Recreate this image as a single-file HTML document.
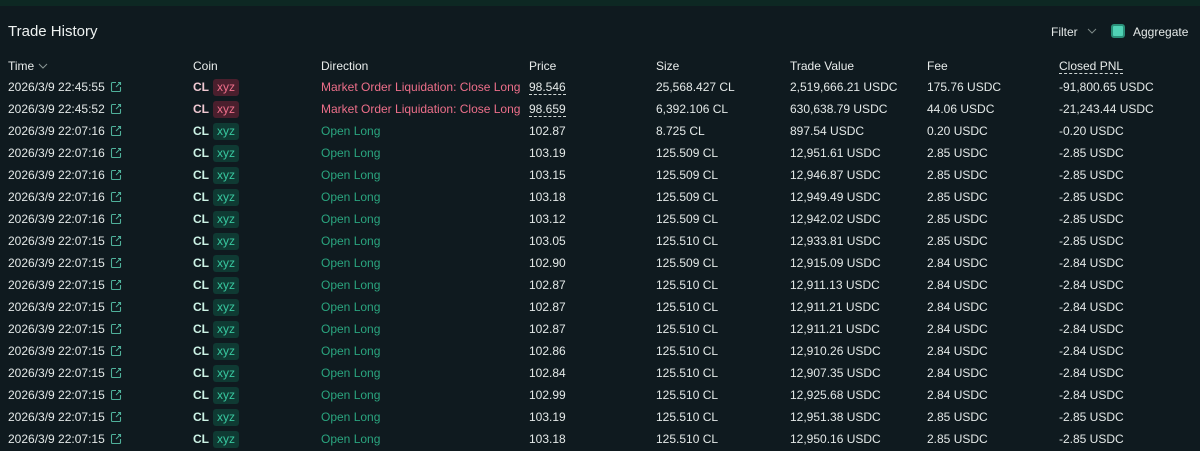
<!DOCTYPE html>
<html><head><meta charset="utf-8"><style>
*{margin:0;padding:0;box-sizing:border-box}
body{width:1200px;height:451px;background:#0f1a1f;font-family:"Liberation Sans",sans-serif;color:#e4e9e8;font-size:12px;overflow:hidden;position:relative}
i{font-style:normal}
.top{position:absolute;left:0;top:0;width:1200px;height:6px;background:#0d2823}
.title{position:absolute;left:8px;top:23px;font-size:15px;color:#eef2f1}
.filter{position:absolute;left:1051px;top:25px;font-size:12px}
.chev{position:absolute;left:1087px;top:27px}
.cb{position:absolute;left:1111px;top:24px;width:14px;height:14px;border:2px solid #2a8f78;border-radius:3px;background:#50d2b5}
.agg{position:absolute;left:1133px;top:25px}
.row{position:absolute;left:0;height:22px;width:1200px;line-height:22px;white-space:nowrap}
.row>span{position:absolute}
.c1{left:8px}.c2{left:193px}.c3{left:321px}.c4{left:529px}.c5{left:656px}.c6{left:790px}.c7{left:927px}.c8{left:1059px}
.hd span{color:#e8eceb}
.dash{border-bottom:1px dashed #cfd6d4;line-height:14px;top:4px}
.ic{position:absolute;left:110px;top:5px}
.cl{font-weight:bold}
.b{display:inline-block;padding:0 4px;margin-left:4px;border-radius:3px;line-height:17px}
.r .cl{color:#f0c9d2}.r .b{background:#4a1f2d;color:#ed6f8a}.r .c3{color:#ed6f8a}
.g .cl{color:#cdf3e6}.g .b{background:#0f3a33;color:#38c79f}.g .c3{color:#2aa57f}
</style></head><body>
<div class="top"></div>
<div class="title">Trade History</div>
<div class="filter">Filter</div>
<svg class="chev" width="10" height="8" viewBox="0 0 10 8"><path d="M1 2l4 4 4-4" fill="none" stroke="#7d8a88" stroke-width="1"/></svg>
<div class="cb"></div><div class="agg">Aggregate</div>
<svg width="0" height="0" style="position:absolute"><defs><symbol id="x" viewBox="0 0 12 12"><path d="M6 1.5H2.5a1 1 0 0 0-1 1v7a1 1 0 0 0 1 1h7a1 1 0 0 0 1-1V6M8 1.5h2.5V4M10.5 1.5L6 6" fill="none" stroke="#4fb09a" stroke-width="1.1"/></symbol></defs></svg>
<div class="row hd" style="top:55px"><span class="c1">Time <svg width="10" height="8" viewBox="0 0 10 8"><path d="M1 2l4 4 4-4" fill="none" stroke="#8a9694" stroke-width="1"/></svg></span><span class="c2">Coin</span><span class="c3">Direction</span><span class="c4">Price</span><span class="c5">Size</span><span class="c6">Trade Value</span><span class="c7">Fee</span><span class="c8 dash">Closed PNL</span></div>

<div class="row r" style="top:76px"><span class="c1">2026/3/9 22:45:55</span><svg class="ic" width="12" height="12"><use href="#x"/></svg><span class="c2"><b class="cl">CL</b><i class="b">xyz</i></span><span class="c3">Market Order Liquidation: Close Long</span><span class="c4 dash">98.546</span><span class="c5">25,568.427 CL</span><span class="c6">2,519,666.21 USDC</span><span class="c7">175.76 USDC</span><span class="c8">-91,800.65 USDC</span></div>
<div class="row r" style="top:98px"><span class="c1">2026/3/9 22:45:52</span><svg class="ic" width="12" height="12"><use href="#x"/></svg><span class="c2"><b class="cl">CL</b><i class="b">xyz</i></span><span class="c3">Market Order Liquidation: Close Long</span><span class="c4 dash">98.659</span><span class="c5">6,392.106 CL</span><span class="c6">630,638.79 USDC</span><span class="c7">44.06 USDC</span><span class="c8">-21,243.44 USDC</span></div>
<div class="row g" style="top:120px"><span class="c1">2026/3/9 22:07:16</span><svg class="ic" width="12" height="12"><use href="#x"/></svg><span class="c2"><b class="cl">CL</b><i class="b">xyz</i></span><span class="c3">Open Long</span><span class="c4">102.87</span><span class="c5">8.725 CL</span><span class="c6">897.54 USDC</span><span class="c7">0.20 USDC</span><span class="c8">-0.20 USDC</span></div>
<div class="row g" style="top:142px"><span class="c1">2026/3/9 22:07:16</span><svg class="ic" width="12" height="12"><use href="#x"/></svg><span class="c2"><b class="cl">CL</b><i class="b">xyz</i></span><span class="c3">Open Long</span><span class="c4">103.19</span><span class="c5">125.509 CL</span><span class="c6">12,951.61 USDC</span><span class="c7">2.85 USDC</span><span class="c8">-2.85 USDC</span></div>
<div class="row g" style="top:164px"><span class="c1">2026/3/9 22:07:16</span><svg class="ic" width="12" height="12"><use href="#x"/></svg><span class="c2"><b class="cl">CL</b><i class="b">xyz</i></span><span class="c3">Open Long</span><span class="c4">103.15</span><span class="c5">125.509 CL</span><span class="c6">12,946.87 USDC</span><span class="c7">2.85 USDC</span><span class="c8">-2.85 USDC</span></div>
<div class="row g" style="top:186px"><span class="c1">2026/3/9 22:07:16</span><svg class="ic" width="12" height="12"><use href="#x"/></svg><span class="c2"><b class="cl">CL</b><i class="b">xyz</i></span><span class="c3">Open Long</span><span class="c4">103.18</span><span class="c5">125.509 CL</span><span class="c6">12,949.49 USDC</span><span class="c7">2.85 USDC</span><span class="c8">-2.85 USDC</span></div>
<div class="row g" style="top:208px"><span class="c1">2026/3/9 22:07:16</span><svg class="ic" width="12" height="12"><use href="#x"/></svg><span class="c2"><b class="cl">CL</b><i class="b">xyz</i></span><span class="c3">Open Long</span><span class="c4">103.12</span><span class="c5">125.509 CL</span><span class="c6">12,942.02 USDC</span><span class="c7">2.85 USDC</span><span class="c8">-2.85 USDC</span></div>
<div class="row g" style="top:230px"><span class="c1">2026/3/9 22:07:15</span><svg class="ic" width="12" height="12"><use href="#x"/></svg><span class="c2"><b class="cl">CL</b><i class="b">xyz</i></span><span class="c3">Open Long</span><span class="c4">103.05</span><span class="c5">125.510 CL</span><span class="c6">12,933.81 USDC</span><span class="c7">2.85 USDC</span><span class="c8">-2.85 USDC</span></div>
<div class="row g" style="top:252px"><span class="c1">2026/3/9 22:07:15</span><svg class="ic" width="12" height="12"><use href="#x"/></svg><span class="c2"><b class="cl">CL</b><i class="b">xyz</i></span><span class="c3">Open Long</span><span class="c4">102.90</span><span class="c5">125.509 CL</span><span class="c6">12,915.09 USDC</span><span class="c7">2.84 USDC</span><span class="c8">-2.84 USDC</span></div>
<div class="row g" style="top:274px"><span class="c1">2026/3/9 22:07:15</span><svg class="ic" width="12" height="12"><use href="#x"/></svg><span class="c2"><b class="cl">CL</b><i class="b">xyz</i></span><span class="c3">Open Long</span><span class="c4">102.87</span><span class="c5">125.510 CL</span><span class="c6">12,911.13 USDC</span><span class="c7">2.84 USDC</span><span class="c8">-2.84 USDC</span></div>
<div class="row g" style="top:296px"><span class="c1">2026/3/9 22:07:15</span><svg class="ic" width="12" height="12"><use href="#x"/></svg><span class="c2"><b class="cl">CL</b><i class="b">xyz</i></span><span class="c3">Open Long</span><span class="c4">102.87</span><span class="c5">125.510 CL</span><span class="c6">12,911.21 USDC</span><span class="c7">2.84 USDC</span><span class="c8">-2.84 USDC</span></div>
<div class="row g" style="top:318px"><span class="c1">2026/3/9 22:07:15</span><svg class="ic" width="12" height="12"><use href="#x"/></svg><span class="c2"><b class="cl">CL</b><i class="b">xyz</i></span><span class="c3">Open Long</span><span class="c4">102.87</span><span class="c5">125.510 CL</span><span class="c6">12,911.21 USDC</span><span class="c7">2.84 USDC</span><span class="c8">-2.84 USDC</span></div>
<div class="row g" style="top:340px"><span class="c1">2026/3/9 22:07:15</span><svg class="ic" width="12" height="12"><use href="#x"/></svg><span class="c2"><b class="cl">CL</b><i class="b">xyz</i></span><span class="c3">Open Long</span><span class="c4">102.86</span><span class="c5">125.510 CL</span><span class="c6">12,910.26 USDC</span><span class="c7">2.84 USDC</span><span class="c8">-2.84 USDC</span></div>
<div class="row g" style="top:362px"><span class="c1">2026/3/9 22:07:15</span><svg class="ic" width="12" height="12"><use href="#x"/></svg><span class="c2"><b class="cl">CL</b><i class="b">xyz</i></span><span class="c3">Open Long</span><span class="c4">102.84</span><span class="c5">125.510 CL</span><span class="c6">12,907.35 USDC</span><span class="c7">2.84 USDC</span><span class="c8">-2.84 USDC</span></div>
<div class="row g" style="top:384px"><span class="c1">2026/3/9 22:07:15</span><svg class="ic" width="12" height="12"><use href="#x"/></svg><span class="c2"><b class="cl">CL</b><i class="b">xyz</i></span><span class="c3">Open Long</span><span class="c4">102.99</span><span class="c5">125.510 CL</span><span class="c6">12,925.68 USDC</span><span class="c7">2.84 USDC</span><span class="c8">-2.84 USDC</span></div>
<div class="row g" style="top:406px"><span class="c1">2026/3/9 22:07:15</span><svg class="ic" width="12" height="12"><use href="#x"/></svg><span class="c2"><b class="cl">CL</b><i class="b">xyz</i></span><span class="c3">Open Long</span><span class="c4">103.19</span><span class="c5">125.510 CL</span><span class="c6">12,951.38 USDC</span><span class="c7">2.85 USDC</span><span class="c8">-2.85 USDC</span></div>
<div class="row g" style="top:428px"><span class="c1">2026/3/9 22:07:15</span><svg class="ic" width="12" height="12"><use href="#x"/></svg><span class="c2"><b class="cl">CL</b><i class="b">xyz</i></span><span class="c3">Open Long</span><span class="c4">103.18</span><span class="c5">125.510 CL</span><span class="c6">12,950.16 USDC</span><span class="c7">2.85 USDC</span><span class="c8">-2.85 USDC</span></div>
</body></html>
